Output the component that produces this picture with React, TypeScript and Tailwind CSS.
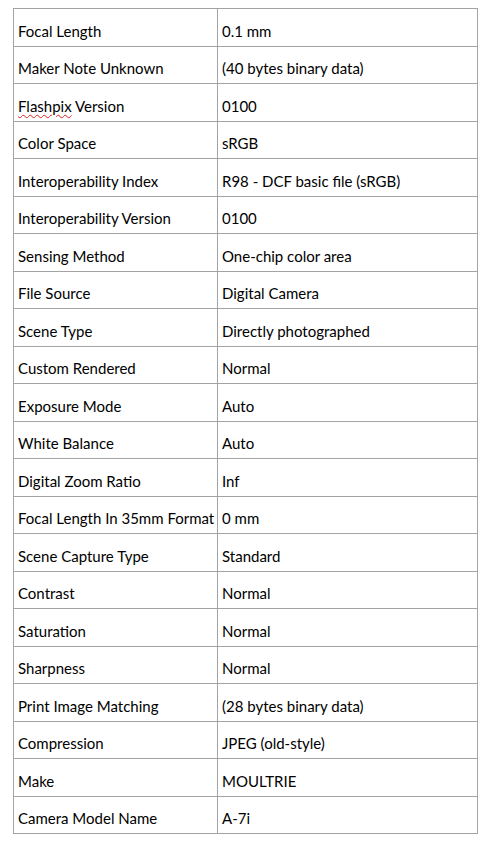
const rows: [string, string][] = [
  ['Focal Length', '0.1 mm'],
  ['Maker Note Unknown', '(40 bytes binary data)'],
  ['Flashpix Version', '0100'],
  ['Color Space', 'sRGB'],
  ['Interoperability Index', 'R98 - DCF basic file (sRGB)'],
  ['Interoperability Version', '0100'],
  ['Sensing Method', 'One-chip color area'],
  ['File Source', 'Digital Camera'],
  ['Scene Type', 'Directly photographed'],
  ['Custom Rendered', 'Normal'],
  ['Exposure Mode', 'Auto'],
  ['White Balance', 'Auto'],
  ['Digital Zoom Ratio', 'Inf'],
  ['Focal Length In 35mm Format', '0 mm'],
  ['Scene Capture Type', 'Standard'],
  ['Contrast', 'Normal'],
  ['Saturation', 'Normal'],
  ['Sharpness', 'Normal'],
  ['Print Image Matching', '(28 bytes binary data)'],
  ['Compression', 'JPEG (old-style)'],
  ['Make', 'MOULTRIE'],
  ['Camera Model Name', 'A-7i'],
]

const Label = ({ text }: { text: string }) => {
  if (text === 'Flashpix Version') {
    return (
      <span>
        <span className="underline decoration-wavy decoration-[#e02020] decoration-1 underline-offset-2">Flashpix</span> Version
      </span>
    )
  }
  return <span>{text}</span>
}

const App = () => {
  return (
    <div className="w-[485px] h-[847px] bg-white pt-[8px] pl-[13px]" style={{ fontFamily: 'Lato, "Open Sans", sans-serif' }}>
      <div className="w-[465px] border-l border-t border-[#a3a3a3] text-[15px] text-black">
        {rows.map(([k, v]) => (
          <div key={k} className="grid grid-cols-[204px_1fr] h-[37.5px]">
            <div className="border-r border-b border-[#a3a3a3] flex items-end pl-[4px] pb-[7px] leading-none whitespace-nowrap">
              <Label text={k} />
            </div>
            <div className="border-r border-b border-[#a3a3a3] flex items-end pl-[4px] pb-[7px] leading-none whitespace-nowrap">
              {v}
            </div>
          </div>
        ))}
      </div>
    </div>
  )
}

export default App
